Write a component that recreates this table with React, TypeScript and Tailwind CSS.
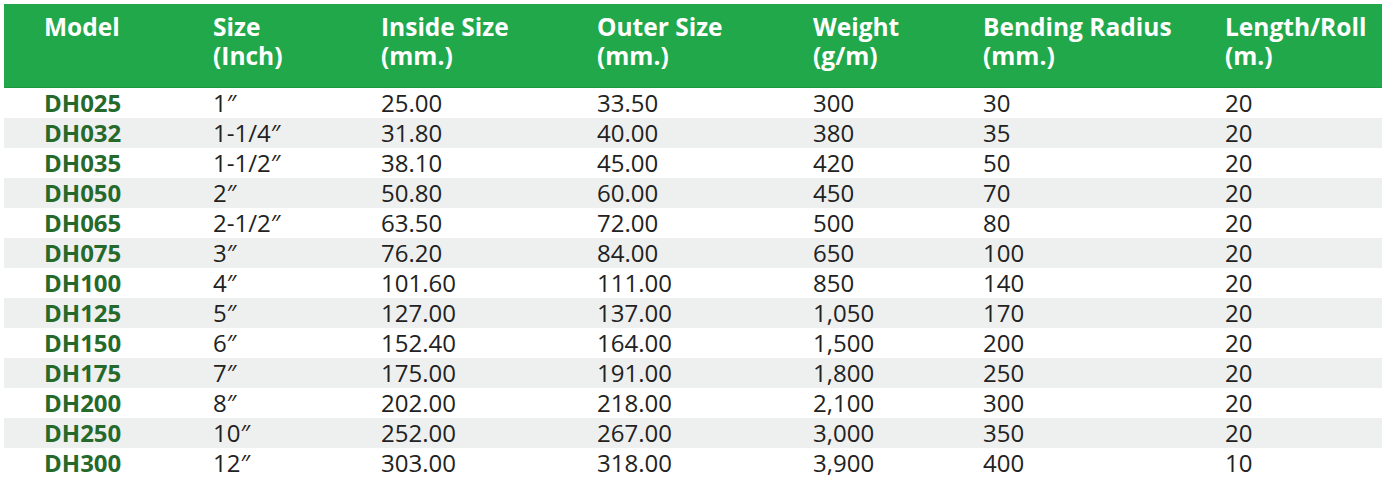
const headers: [string, string][] = [
  ["Model", ""],
  ["Size", "(Inch)"],
  ["Inside Size", "(mm.)"],
  ["Outer Size", "(mm.)"],
  ["Weight", "(g/m)"],
  ["Bending Radius", "(mm.)"],
  ["Length/Roll", "(m.)"],
];

const rows: string[][] = [
  ["DH025", "1″", "25.00", "33.50", "300", "30", "20"],
  ["DH032", "1-1/4″", "31.80", "40.00", "380", "35", "20"],
  ["DH035", "1-1/2″", "38.10", "45.00", "420", "50", "20"],
  ["DH050", "2″", "50.80", "60.00", "450", "70", "20"],
  ["DH065", "2-1/2″", "63.50", "72.00", "500", "80", "20"],
  ["DH075", "3″", "76.20", "84.00", "650", "100", "20"],
  ["DH100", "4″", "101.60", "111.00", "850", "140", "20"],
  ["DH125", "5″", "127.00", "137.00", "1,050", "170", "20"],
  ["DH150", "6″", "152.40", "164.00", "1,500", "200", "20"],
  ["DH175", "7″", "175.00", "191.00", "1,800", "250", "20"],
  ["DH200", "8″", "202.00", "218.00", "2,100", "300", "20"],
  ["DH250", "10″", "252.00", "267.00", "3,000", "350", "20"],
  ["DH300", "12″", "303.00", "318.00", "3,900", "400", "10"],
];

const cols = "grid grid-cols-[209px_168px_216px_216px_170px_242px_157px]";

export default function App() {
  return (
    <div className="min-h-[486px] bg-white px-1 pt-1 font-['Open_Sans',sans-serif]">
      <div className="w-[1378px]">
        <div className={`${cols} h-[84px] border-b border-[#1d9843] bg-[#21a84b] pt-[8px] text-[24.5px] font-bold leading-[29px] text-white`}>
          {headers.map(([a, b], i) => (
            <div key={a} className={i === 0 ? "pl-10" : ""}>
              <div>{a}</div>
              {b && <div>{b}</div>}
            </div>
          ))}
        </div>
        {rows.map((r, ri) => (
          <div
            key={r[0]}
            className={`${cols} h-[30px] text-[24px] leading-[30px] text-[#222] ${ri % 2 === 1 ? "bg-[#eef0f0]" : "bg-white"}`}
          >
            {r.map((c, ci) => (
              <div key={ci} className={ci === 0 ? "pl-10 font-bold text-[#25692b]" : ""}>
                {c}
              </div>
            ))}
          </div>
        ))}
      </div>
    </div>
  );
}
